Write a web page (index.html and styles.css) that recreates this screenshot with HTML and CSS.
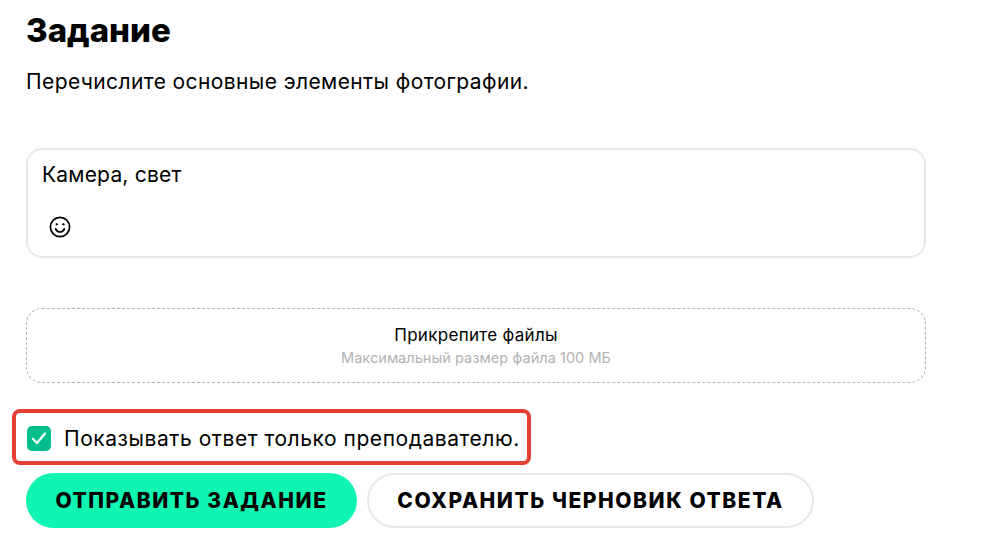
FILE: index.html
```html
<!doctype html>
<html lang="ru">
<head>
    <meta charset="utf-8">
    <title>Задание</title>
    <link rel="stylesheet" href="styles.css">
</head>
<body>
<div class="content">
    <h1 class="taskTitle">Задание</h1>
    <p class="taskText">Перечислите основные элементы фотографии.</p>

    <div class="answerBox">
        <p class="answerText">Камера, свет</p>
        <svg class="smile" viewBox="0 0 22 22" width="22" height="22" fill="none" stroke="#000" stroke-width="1.7" stroke-linecap="round">
            <circle cx="11" cy="11" r="9.6"/>
            <path d="M6.6 13c1 2 2.700 3 4.400 3s3.400-1 4.400-3"/>
            <circle cx="7.700" cy="8.300" r=".7" fill="#000" stroke-width="1"/>
            <circle cx="14.300" cy="8.300" r=".7" fill="#000" stroke-width="1"/>
        </svg>
    </div>

    <div class="fileBox">
        <p class="fileTitle">Прикрепите файлы</p>
        <p class="fileHint">Максимальный размер файла 100 МБ</p>
    </div>

    <label class="teacherOnly">
        <span class="checkBox">
            <svg viewBox="0 0 24 24" width="24" height="24" fill="none" stroke="#fff" stroke-width="2.200" stroke-linecap="round" stroke-linejoin="round">
                <path d="M5.800 12.800l4.200 4.200 8-9.500"/>
            </svg>
        </span>
        <span class="checkLabel">Показывать ответ только преподавателю.</span>
        <span class="redFrame"></span>
    </label>

    <div class="buttons">
        <button class="btn btnSend">ОТПРАВИТЬ ЗАДАНИЕ</button>
        <button class="btn btnDraft">СОХРАНИТЬ ЧЕРНОВИК ОТВЕТА</button>
    </div>
</div>
</body>
</html>
```

FILE: styles.css
```css
* {
    margin: 0;
    padding: 0;
    box-sizing: border-box;
}

html, body {
    background: #fff;
    font-family: "Inter", "Noto Sans", "Liberation Sans", sans-serif;
    color: #000;
    height: 100%;
    overflow: hidden;
}

.content {
    width: 900px;
    margin-left: 26px;
    display: flex;
    flex-direction: column;
    align-items: stretch;
}

.taskTitle {
    font-size: 33px;
    line-height: 40px;
    font-weight: 800;
    margin-top: 10px;
}

.taskText {
    font-size: 21px;
    line-height: 28px;
    letter-spacing: .4px;
    margin-top: 18px;
}

.answerBox {
    height: 110px;
    margin-top: 52px;
    border: 2px solid #e8e8e8;
    border-radius: 16px;
    padding: 10px 14px;
}

.answerText {
    font-size: 21px;
    line-height: 30px;
    letter-spacing: .2px;
}

.smile {
    display: block;
    margin: 26px 0 0 7px;
}

.fileBox {
    height: 75px;
    margin-top: 50px;
    border: 1px dashed #b5b5b5;
    border-radius: 16px;
    text-align: center;
    padding-top: 16px;
}

.fileTitle {
    font-size: 17px;
    line-height: 20px;
    letter-spacing: .3px;
}

.fileHint {
    font-size: 14.600px;
    line-height: 18px;
    margin-top: 4px;
    color: #b3b3b3;
}

.teacherOnly {
    position: relative;
    display: flex;
    align-items: center;
    gap: 13px;
    height: 26px;
    margin-top: 42px;
    margin-left: 1px;
}

.checkBox {
    width: 24px;
    height: 25px;
    background: #00bf8c;
    border-radius: 5px;
    display: flex;
    align-items: center;
    justify-content: center;
}

.checkLabel {
    font-size: 21px;
    line-height: 26px;
    padding-top: 2px;
    letter-spacing: .55px;
}

.redFrame {
    position: absolute;
    left: -15px;
    top: -16px;
    width: 519px;
    height: 56px;
    border: 4px solid #e33f33;
    border-radius: 8px;
}

.buttons {
    display: flex;
    gap: 10px;
    margin-top: 22px;
}

.btn {
    height: 55px;
    border-radius: 28px;
    font-family: inherit;
    font-size: 21px;
    font-weight: 800;
    letter-spacing: 1.550px;
    color: #000;
    background: #fff;
    border: 2px solid #e8e8e8;
}

.btnSend {
    width: 331px;
    background: #10f5b1;
    border: none;
}

.btnDraft {
    width: 447px;
}
```
